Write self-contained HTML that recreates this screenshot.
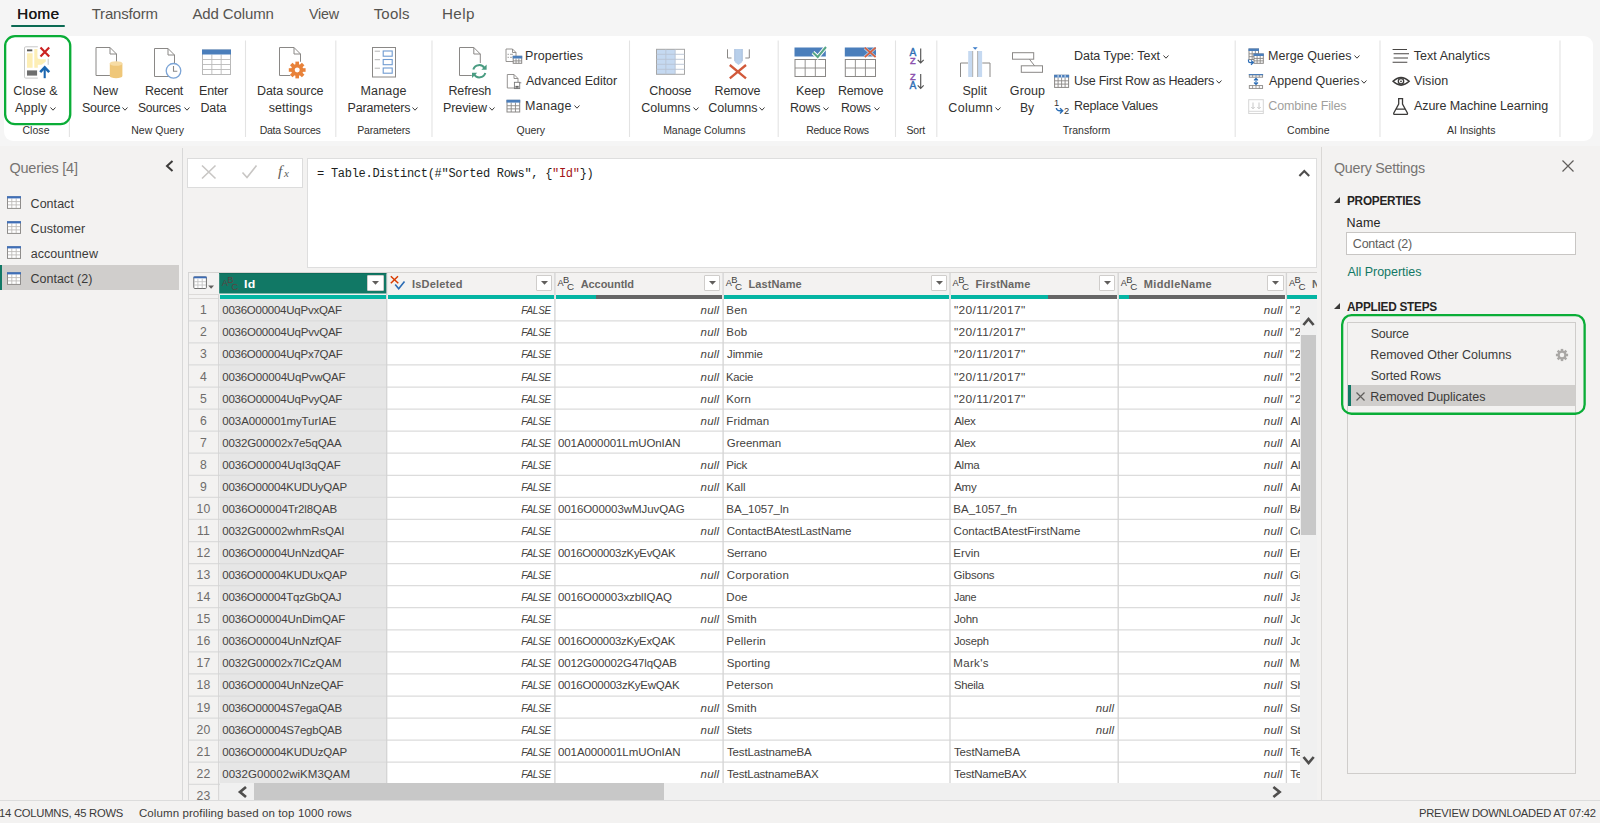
<!DOCTYPE html>
<html lang="en"><head><meta charset="utf-8"><title>Power Query Editor</title>
<style>
*{box-sizing:border-box;margin:0;padding:0}
html,body{width:1600px;height:823px;overflow:hidden;background:#f3f2f1;font-family:"Liberation Sans",sans-serif;}
#app{position:relative;width:1600px;height:823px;overflow:hidden;background:#f3f2f1}
.t{position:absolute;white-space:pre;line-height:20px;height:20px}
.b{position:absolute}
svg{position:absolute;overflow:visible}
</style></head><body><div id="app">
<!-- tabs --><div class="b" style="left:0px;top:0px;width:1600px;height:146px;background:#f5f5f5;"></div><span class="t" style="font-size:15px;color:#1b1a19;left:17.27px;transform-origin:0 0;top:3.87px;transform:scaleX(1.021);letter-spacing:0.35px;text-shadow:0.25px 0 0 #1b1a19;">Home</span><div class="b" style="left:11px;top:24.7px;width:54px;height:2.6px;background:#0b6a53;border-radius:1.5px;"></div><span class="t" style="font-size:15px;color:#55534f;left:91.66px;top:3.87px;letter-spacing:-0.18px;">Transform</span><span class="t" style="font-size:15px;color:#55534f;left:192.47px;top:3.87px;letter-spacing:-0.12px;">Add Column</span><span class="t" style="font-size:15px;color:#55534f;left:309.43px;transform-origin:0 0;top:3.87px;transform:scaleX(0.953);letter-spacing:-0.25px;">View</span><span class="t" style="font-size:15px;color:#55534f;left:373.66px;top:3.87px;letter-spacing:0.21px;">Tools</span><span class="t" style="font-size:15px;color:#55534f;left:442.27px;transform-origin:0 0;top:3.87px;transform:scaleX(1.015);letter-spacing:0.35px;">Help</span><!-- ribbon --><div class="b" style="left:4px;top:36px;width:1589px;height:105px;background:#ffffff;border-radius:9px;"></div><svg style="left:0;top:0" width="1600" height="150" viewBox="0 0 1600 150"><path d="M69.4 40.5V137M245.5 40.5V137M335.8 40.5V137M432 40.5V137M629.5 40.5V137M778.2 40.5V137M895.5 40.5V137M936.8 40.5V137M1235.2 40.5V137M1380 40.5V137M1560 40.5V137" stroke="#e3e3e3" stroke-width="1.1" fill="none"/></svg><span class="t" style="font-size:12.5px;color:#323130;left:13.37px;top:81.47px;letter-spacing:0.09px;">Close &amp;</span><span class="t" style="font-size:12.5px;color:#323130;left:14.98px;top:97.97px;letter-spacing:0.19px;">Apply</span><svg style="left:49.7px;top:106.5px" width="6" height="4.2" viewBox="0 0 6 4.2"><path d="M0.5 0.5 L3 3.2 L5.5 0.5" fill="none" stroke="#3b3a39" stroke-width="1"/></svg><span class="t" style="font-size:10.5px;color:#323130;left:22.47px;top:119.76px;letter-spacing:0.04px;">Close</span><span class="t" style="font-size:12.5px;color:#323130;left:92.97px;top:81.47px;letter-spacing:-0.01px;">New</span><span class="t" style="font-size:12.5px;color:#323130;left:81.93px;top:97.97px;letter-spacing:-0.20px;">Source</span><svg style="left:122.2px;top:106.5px" width="6" height="4.2" viewBox="0 0 6 4.2"><path d="M0.5 0.5 L3 3.2 L5.5 0.5" fill="none" stroke="#3b3a39" stroke-width="1"/></svg><span class="t" style="font-size:12.5px;color:#323130;left:144.97px;top:81.47px;letter-spacing:-0.25px;">Recent</span><span class="t" style="font-size:12.5px;color:#323130;left:138.43px;transform-origin:0 0;top:97.97px;transform:scaleX(0.969);letter-spacing:-0.25px;">Sources</span><svg style="left:184.2px;top:106.5px" width="6" height="4.2" viewBox="0 0 6 4.2"><path d="M0.5 0.5 L3 3.2 L5.5 0.5" fill="none" stroke="#3b3a39" stroke-width="1"/></svg><span class="t" style="font-size:12.5px;color:#323130;left:198.97px;top:81.47px;letter-spacing:-0.16px;">Enter</span><span class="t" style="font-size:12.5px;color:#323130;left:200.47px;top:97.97px;letter-spacing:-0.13px;">Data</span><span class="t" style="font-size:10.5px;color:#323130;left:131.14px;top:119.76px;letter-spacing:0.05px;">New Query</span><span class="t" style="font-size:12.5px;color:#323130;left:256.97px;top:81.47px;letter-spacing:-0.08px;">Data source</span><span class="t" style="font-size:12.5px;color:#323130;left:268.65px;top:97.97px;letter-spacing:0.10px;">settings</span><span class="t" style="font-size:10.5px;color:#323130;left:259.64px;top:119.76px;letter-spacing:-0.22px;">Data Sources</span><span class="t" style="font-size:12.5px;color:#323130;left:360.47px;top:81.47px;letter-spacing:0.18px;">Manage</span><span class="t" style="font-size:12.5px;color:#323130;left:347.47px;top:97.97px;letter-spacing:-0.18px;">Parameters</span><svg style="left:412px;top:106.5px" width="6" height="4.2" viewBox="0 0 6 4.2"><path d="M0.5 0.5 L3 3.2 L5.5 0.5" fill="none" stroke="#3b3a39" stroke-width="1"/></svg><span class="t" style="font-size:10.5px;color:#323130;left:357.14px;top:119.76px;letter-spacing:-0.12px;">Parameters</span><span class="t" style="font-size:12.5px;color:#323130;left:448.47px;top:81.47px;letter-spacing:-0.16px;">Refresh</span><span class="t" style="font-size:12.5px;color:#323130;left:442.97px;top:97.97px;letter-spacing:-0.08px;">Preview</span><svg style="left:489.2px;top:106.5px" width="6" height="4.2" viewBox="0 0 6 4.2"><path d="M0.5 0.5 L3 3.2 L5.5 0.5" fill="none" stroke="#3b3a39" stroke-width="1"/></svg><span class="t" style="font-size:12.5px;color:#323130;left:524.97px;top:46.48px;letter-spacing:0.11px;">Properties</span><span class="t" style="font-size:12.5px;color:#323130;left:525.98px;top:71.47px;letter-spacing:-0.04px;">Advanced Editor</span><span class="t" style="font-size:12.5px;color:#323130;left:524.97px;top:96.47px;letter-spacing:0.28px;">Manage</span><svg style="left:573.7px;top:105px" width="6" height="4.2" viewBox="0 0 6 4.2"><path d="M0.5 0.5 L3 3.2 L5.5 0.5" fill="none" stroke="#3b3a39" stroke-width="1"/></svg><span class="t" style="font-size:10.5px;color:#323130;left:516.5px;top:119.76px;letter-spacing:-0.02px;">Query</span><span class="t" style="font-size:12.5px;color:#323130;left:649.37px;top:81.47px;letter-spacing:-0.18px;">Choose</span><span class="t" style="font-size:12.5px;color:#323130;left:641.37px;top:97.97px;letter-spacing:-0.04px;">Columns</span><svg style="left:692.5px;top:106.5px" width="6" height="4.2" viewBox="0 0 6 4.2"><path d="M0.5 0.5 L3 3.2 L5.5 0.5" fill="none" stroke="#3b3a39" stroke-width="1"/></svg><span class="t" style="font-size:12.5px;color:#323130;left:714.47px;top:81.47px;letter-spacing:-0.09px;">Remove</span><span class="t" style="font-size:12.5px;color:#323130;left:708.37px;top:97.97px;letter-spacing:-0.04px;">Columns</span><svg style="left:759px;top:106.5px" width="6" height="4.2" viewBox="0 0 6 4.2"><path d="M0.5 0.5 L3 3.2 L5.5 0.5" fill="none" stroke="#3b3a39" stroke-width="1"/></svg><span class="t" style="font-size:10.5px;color:#323130;left:663.14px;top:119.76px;letter-spacing:-0.00px;">Manage Columns</span><span class="t" style="font-size:12.5px;color:#323130;left:795.97px;top:81.47px;letter-spacing:-0.05px;">Keep</span><span class="t" style="font-size:12.5px;color:#323130;left:789.97px;top:97.97px;letter-spacing:-0.25px;">Rows</span><svg style="left:823px;top:106.5px" width="6" height="4.2" viewBox="0 0 6 4.2"><path d="M0.5 0.5 L3 3.2 L5.5 0.5" fill="none" stroke="#3b3a39" stroke-width="1"/></svg><span class="t" style="font-size:12.5px;color:#323130;left:837.97px;top:81.47px;letter-spacing:-0.19px;">Remove</span><span class="t" style="font-size:12.5px;color:#323130;left:840.97px;transform-origin:0 0;top:97.97px;transform:scaleX(0.981);letter-spacing:-0.25px;">Rows</span><svg style="left:873.5px;top:106.5px" width="6" height="4.2" viewBox="0 0 6 4.2"><path d="M0.5 0.5 L3 3.2 L5.5 0.5" fill="none" stroke="#3b3a39" stroke-width="1"/></svg><span class="t" style="font-size:10.5px;color:#323130;left:806.14px;top:119.76px;letter-spacing:-0.25px;">Reduce Rows</span><span class="t" style="font-size:10.5px;color:#323130;left:906.52px;top:119.76px;letter-spacing:-0.24px;">Sort</span><span class="t" style="font-size:12.5px;color:#323130;left:962.43px;top:81.47px;letter-spacing:0.08px;">Split</span><span class="t" style="font-size:12.5px;color:#323130;left:948.37px;top:97.97px;letter-spacing:0.27px;">Column</span><svg style="left:994.5px;top:106.5px" width="6" height="4.2" viewBox="0 0 6 4.2"><path d="M0.5 0.5 L3 3.2 L5.5 0.5" fill="none" stroke="#3b3a39" stroke-width="1"/></svg><span class="t" style="font-size:12.5px;color:#323130;left:1009.87px;top:81.47px;letter-spacing:0.10px;">Group</span><span class="t" style="font-size:12.5px;color:#323130;left:1019.97px;transform-origin:0 0;top:97.97px;transform:scaleX(0.978);letter-spacing:-0.25px;">By</span><span class="t" style="font-size:12.5px;color:#323130;left:1073.97px;top:46.48px;letter-spacing:-0.02px;">Data Type: Text</span><svg style="left:1163px;top:55px" width="6" height="4.2" viewBox="0 0 6 4.2"><path d="M0.5 0.5 L3 3.2 L5.5 0.5" fill="none" stroke="#3b3a39" stroke-width="1"/></svg><span class="t" style="font-size:12.5px;color:#323130;left:1074.04px;top:71.47px;letter-spacing:-0.25px;">Use First Row as Headers</span><svg style="left:1216.2px;top:80px" width="6" height="4.2" viewBox="0 0 6 4.2"><path d="M0.5 0.5 L3 3.2 L5.5 0.5" fill="none" stroke="#3b3a39" stroke-width="1"/></svg><span class="t" style="font-size:12.5px;color:#323130;left:1073.97px;top:96.47px;letter-spacing:-0.20px;">Replace Values</span><span class="t" style="font-size:10.5px;color:#323130;left:1062.76px;top:119.76px;">Transform</span><span class="t" style="font-size:12.5px;color:#323130;left:1267.97px;top:46.48px;letter-spacing:0.07px;">Merge Queries</span><svg style="left:1353.7px;top:55px" width="6" height="4.2" viewBox="0 0 6 4.2"><path d="M0.5 0.5 L3 3.2 L5.5 0.5" fill="none" stroke="#3b3a39" stroke-width="1"/></svg><span class="t" style="font-size:12.5px;color:#323130;left:1268.98px;top:71.47px;letter-spacing:0.01px;">Append Queries</span><svg style="left:1361px;top:80px" width="6" height="4.2" viewBox="0 0 6 4.2"><path d="M0.5 0.5 L3 3.2 L5.5 0.5" fill="none" stroke="#3b3a39" stroke-width="1"/></svg><span class="t" style="font-size:12.5px;color:#a19f9d;left:1268.37px;top:96.47px;letter-spacing:-0.15px;">Combine Files</span><span class="t" style="font-size:10.5px;color:#323130;left:1286.97px;top:119.76px;letter-spacing:0.08px;">Combine</span><span class="t" style="font-size:12.5px;color:#323130;left:1413.72px;top:46.48px;letter-spacing:0.04px;">Text Analytics</span><span class="t" style="font-size:12.5px;color:#323130;left:1413.95px;top:71.47px;letter-spacing:0.11px;">Vision</span><span class="t" style="font-size:12.5px;color:#323130;left:1413.98px;top:96.47px;letter-spacing:-0.06px;">Azure Machine Learning</span><span class="t" style="font-size:10.5px;color:#323130;left:1446.98px;top:119.76px;letter-spacing:-0.06px;">AI Insights</span><svg style="left:0;top:0" width="1600" height="150" viewBox="0 0 1600 150"><rect x="24.5" y="46.8" width="23.7" height="31.3" rx="1.2" fill="#fff" stroke="#c8c8c8"/><path d="M27 53.3 H32.6 V67.8 H27 Z M34.3 49.1 H37.5 V57.6 L40.5 59.3 H45.8 V61.4 L38 67.8 H34.3 Z" fill="#fdeeb5"/><rect x="27" y="49.4" width="5.3" height="1.9" fill="#5a5a5a"/><rect x="27" y="70.4" width="10.1" height="5.2" fill="#6e6e6e"/><rect x="37.8" y="45.5" width="13" height="13.2" fill="#fff"/><rect x="37.8" y="64.8" width="13" height="14.2" fill="#fff"/><path d="M40.5 47.6 L49.2 56.4 M49.2 47.6 L40.5 56.4" stroke="#cc2222" stroke-width="2.2" fill="none"/><path d="M44.7 78.2 V68" stroke="#1a66b0" stroke-width="2.1" fill="none"/><path d="M40.2 72.2 L44.7 67.3 L49.2 72.2" stroke="#1a66b0" stroke-width="2.6" fill="none"/><path d="M96 47.5 H110 L116.5 54 V75.5 H96 Z" fill="#fff" stroke="#8a8886" stroke-width="1"/><path d="M110 47.5 V54 H116.5" fill="none" stroke="#8a8886" stroke-width="1"/><path d="M109.8 63.5 V76 A6.3 2.3 0 0 0 122.4 76 V63.5 Z" fill="#efc779"/><ellipse cx="116.1" cy="63.5" rx="6.3" ry="2.3" fill="#f7dca4"/><path d="M154.5 48.5 H168 L174.5 55 V76.5 H154.5 Z" fill="#fff" stroke="#8a8886" stroke-width="1"/><path d="M168 48.5 V55 H174.5" fill="none" stroke="#8a8886" stroke-width="1"/><circle cx="173.5" cy="70.8" r="7.3" fill="#fff" stroke="#7ba4d6" stroke-width="1.3"/><path d="M173.5 66 V71.3 H177.3" fill="none" stroke="#8a8886" stroke-width="1.1"/><rect x="202.5" y="50" width="28" height="24.5" fill="#fff" stroke="#b9b9b9" stroke-width="1"/><path d="M211.833 54.5V74.5M221.167 54.5V74.5M202.5 59.5H230.5M202.5 64.5H230.5M202.5 69.5H230.5" fill="none" stroke="#b9b9b9" stroke-width="0.9"/><rect x="202" y="49.5" width="29" height="5" fill="#4a7ebb"/><path d="M279.5 47.5 H294 L300.5 54 V75.5 H279.5 Z" fill="#fff" stroke="#8a8886" stroke-width="1"/><path d="M294 47.5 V54 H300.5" fill="none" stroke="#8a8886" stroke-width="1"/><circle cx="297.2" cy="70" r="9" fill="#fff"/><rect x="295.4" y="61.6" width="3.6" height="4" fill="#e8823a" transform="rotate(0 297.2 70)"/><rect x="295.4" y="61.6" width="3.6" height="4" fill="#e8823a" transform="rotate(45 297.2 70)"/><rect x="295.4" y="61.6" width="3.6" height="4" fill="#e8823a" transform="rotate(90 297.2 70)"/><rect x="295.4" y="61.6" width="3.6" height="4" fill="#e8823a" transform="rotate(135 297.2 70)"/><rect x="295.4" y="61.6" width="3.6" height="4" fill="#e8823a" transform="rotate(180 297.2 70)"/><rect x="295.4" y="61.6" width="3.6" height="4" fill="#e8823a" transform="rotate(225 297.2 70)"/><rect x="295.4" y="61.6" width="3.6" height="4" fill="#e8823a" transform="rotate(270 297.2 70)"/><rect x="295.4" y="61.6" width="3.6" height="4" fill="#e8823a" transform="rotate(315 297.2 70)"/><circle cx="297.2" cy="70" r="4.3" fill="none" stroke="#e8823a" stroke-width="3.6"/><rect x="372.5" y="47.5" width="23" height="29.5" fill="#fff" stroke="#8a8886"/><rect x="383.2" y="51" width="9" height="5.2" fill="#fff" stroke="#6f9bd1" stroke-width="1.1"/><path d="M374.7 51.2 H380" stroke="#b4b4b4" stroke-width="1"/><rect x="383.2" y="59.5" width="9" height="5.2" fill="#fff" stroke="#6f9bd1" stroke-width="1.1"/><path d="M374.7 59.7 H380" stroke="#b4b4b4" stroke-width="1"/><rect x="383.2" y="68" width="9" height="5.2" fill="#fff" stroke="#6f9bd1" stroke-width="1.1"/><path d="M374.7 68.2 H380" stroke="#b4b4b4" stroke-width="1"/><path d="M459.5 47.5 H473.8 L480.3 54 V75.5 H459.5 Z" fill="#fff" stroke="#8a8886" stroke-width="1"/><path d="M473.8 47.5 V54 H480.3" fill="none" stroke="#8a8886" stroke-width="1"/><circle cx="479.3" cy="71.3" r="8.6" fill="#fff"/><path d="M473.3 69.5 A6.2 6.2 0 0 1 484.6 68.2" fill="none" stroke="#4a9c82" stroke-width="2"/><path d="M485.3 73 A6.2 6.2 0 0 1 474 74.3" fill="none" stroke="#4a9c82" stroke-width="2"/><path d="M486.6 64.6 V69.8 H481.4 Z" fill="#4a9c82"/><path d="M472 78 V72.8 H477.2 Z" fill="#4a9c82"/><path d="M506 49 H512.5 L516 52.5 V61.5 H506 Z" fill="#fff" stroke="#8a8886" stroke-width="0.9"/><path d="M512.5 49 V52.5 H516" fill="none" stroke="#8a8886" stroke-width="0.9"/><path d="M507.5 54.3 H509 M510 54.3 H513 M507.5 57.3 H509 M510 57.3 H512" stroke="#9a9a9a" stroke-width="0.9"/><rect x="513.2" y="56.3" width="8.5" height="7" fill="#fff" stroke="#8a8886" stroke-width="1"/><path d="M516.033 58.5V63.3M518.867 58.5V63.3M513.2 60.9H521.7" fill="none" stroke="#8a8886" stroke-width="0.9"/><rect x="512.7" y="55.8" width="9.5" height="2.7" fill="#4a7ebb"/><path d="M507.3 74.5 H514 L518 78.5 V88 H507.3 Z" fill="#fff" stroke="#8a8886" stroke-width="0.9"/><path d="M514 74.5 V78.5 H518" fill="none" stroke="#8a8886" stroke-width="0.9"/><rect x="514.4" y="82.3" width="5.3" height="6.3" fill="#fff" stroke="#7a7a7a" stroke-width="0.9"/><path d="M519.7 82.8 H521.3" stroke="#7a7a7a" stroke-width="0.9"/><path d="M515.4 86.4 H518.7 M515.4 87.8 H518.7" stroke="#555" stroke-width="1"/><rect x="507" y="100.3" width="12.7" height="11.7" fill="#fff" stroke="#8a8886" stroke-width="1"/><path d="M511.233 102.6V112M515.467 102.6V112M507 105.733H519.7M507 108.867H519.7" fill="none" stroke="#8a8886" stroke-width="0.9"/><rect x="506.5" y="99.8" width="13.7" height="2.8" fill="#4a7ebb"/><rect x="656.5" y="49.3" width="28" height="25" fill="#fff"/><rect x="656.5" y="49.3" width="18.7" height="25" fill="#c5d9f1"/><rect x="656.5" y="49.3" width="28" height="25" fill="none" stroke="#a6a6a6" stroke-width="1"/><path d="M665.833 49.3V74.3M675.167 49.3V74.3M656.5 54.3H684.5M656.5 59.3H684.5M656.5 64.3H684.5M656.5 69.3H684.5" fill="none" stroke="#b9c4d4" stroke-width="0.9"/><path d="M727.5 49.3 V58 H731.5 M745.3 58 H749.3 V49.3" fill="none" stroke="#8a8886" stroke-width="1"/><path d="M734.7 49 H742.3 V62 L738.5 65 L734.7 62 Z" fill="#b8cfea"/><path d="M734.7 49 V61 M742.3 49 V61" stroke="#9fb6d6" stroke-width="0.8" fill="none"/><path d="M729.8 65 L746 78.3 M746 65 L729.8 78.3" stroke="#d1593a" stroke-width="2.3" fill="none"/><rect x="794.5" y="47.5" width="31.3" height="9" fill="#4a7ebb"/><rect x="795" y="59.5" width="30.5" height="17" fill="#fff" stroke="#8a8886" stroke-width="1"/><path d="M805.167 59.5V76.5M815.333 59.5V76.5M795 68H825.5" fill="none" stroke="#8a8886" stroke-width="0.9"/><path d="M813 52.5 L817.7 57 L826 47" stroke="#fff" stroke-width="4" fill="none"/><path d="M813 52.5 L817.7 57 L826 47" stroke="#55a585" stroke-width="2" fill="none"/><rect x="844.8" y="47.5" width="31.2" height="9" fill="#4a7ebb"/><rect x="845.3" y="59.5" width="30.2" height="17" fill="#fff" stroke="#8a8886" stroke-width="1"/><path d="M855.367 59.5V76.5M865.433 59.5V76.5M845.3 68H875.5" fill="none" stroke="#8a8886" stroke-width="0.9"/><path d="M864.8 48 L875.3 57 M875.3 48 L864.8 57" stroke="#fff" stroke-width="3.2" fill="none" opacity="0.55"/><path d="M864.8 47.6 L875.6 57.2 M875.6 47.6 L864.8 57.2" stroke="#d6603f" stroke-width="1.7" fill="none"/><text x="909.6" y="55.9" font-family="Liberation Sans, sans-serif" stroke-width="0.4" paint-order="stroke" font-size="10.2" fill="#2f6fb5" stroke="#2f6fb5">A</text><text x="909.9" y="63.6" font-family="Liberation Sans, sans-serif" stroke-width="0.4" paint-order="stroke" font-size="9.2" fill="#8b4fae" stroke="#8b4fae">Z</text><path d="M920.7 48.6 V62.6 M917.7 59.8 L920.7 62.9 L923.7 59.8" stroke="#555" stroke-width="1.15" fill="none"/><text x="909.9" y="80.4" font-family="Liberation Sans, sans-serif" stroke-width="0.4" paint-order="stroke" font-size="9.2" fill="#8b4fae" stroke="#8b4fae">Z</text><text x="909.4" y="88.9" font-family="Liberation Sans, sans-serif" stroke-width="0.4" paint-order="stroke" font-size="10.2" fill="#2f6fb5" stroke="#2f6fb5">A</text><path d="M920.7 74 V88.2 M917.7 85.4 L920.7 88.5 L923.7 85.4" stroke="#555" stroke-width="1.15" fill="none"/><rect x="968.2" y="51" width="4.3" height="26" fill="#c5d9f1"/><rect x="977.8" y="51" width="4.3" height="26" fill="#c5d9f1"/><path d="M972.7 51 V77 M977.6 51 V77" stroke="#a6a6a6" stroke-width="0.9" fill="none"/><path d="M960.5 77 V63 H968 M982.3 63 H990 V77" stroke="#8a8886" stroke-width="1" fill="none"/><path d="M972.7 47.3 H977.7 L975.2 49.8 Z" fill="#3a7bc8"/><rect x="1012.5" y="52.7" width="21.2" height="6.5" fill="#fff" stroke="#8a8886"/><rect x="1021.3" y="65.8" width="21.2" height="6.5" fill="#fff" stroke="#8a8886"/><path d="M1029.4 59.2 L1034.6 65.8" stroke="#8a8886" stroke-width="1" fill="none"/><rect x="1054.6" y="75.3" width="14" height="12.1" fill="#fff" stroke="#8a8886" stroke-width="1"/><path d="M1058.1 77.5V87.4M1061.6 77.5V87.4M1065.1 77.5V87.4M1054.6 80.8H1068.6M1054.6 84.1H1068.6" fill="none" stroke="#8a8886" stroke-width="0.9"/><rect x="1054.1" y="74.8" width="15" height="2.7" fill="#4a7ebb"/><path d="M1058.1 75 V77.3 M1061.6 75 V77.3 M1065.1 75 V77.3" stroke="#fff" stroke-width="0.8"/><text x="1054" y="105.8" font-family="Liberation Sans, sans-serif" font-size="9.3" fill="#333">1</text><text x="1064" y="114.2" font-family="Liberation Sans, sans-serif" font-size="9.3" fill="#333">2</text><path d="M1056.3 108 Q1056.8 110.9 1060 110.8 H1062.3 M1060 108.2 L1062.7 110.8 L1060 113.4" stroke="#2a6db5" stroke-width="1.4" fill="none"/><rect x="1249" y="49" width="9.5" height="10.5" fill="#fff" stroke="#8a8886" stroke-width="1"/><path d="M1252.17 51V59.5M1255.33 51V59.5M1249 53.8333H1258.5M1249 56.6667H1258.5" fill="none" stroke="#8a8886" stroke-width="0.9"/><rect x="1248.5" y="48.5" width="10.5" height="2.5" fill="#4a7ebb"/><rect x="1254" y="54" width="9.3" height="9.3" fill="#fff" stroke="#8a8886" stroke-width="1"/><path d="M1257.1 56V63.3M1260.2 56V63.3M1254 58.4333H1263.3M1254 60.8667H1263.3" fill="none" stroke="#8a8886" stroke-width="0.9"/><rect x="1253.5" y="53.5" width="10.3" height="2.5" fill="#4a7ebb"/><path d="M1248.5 59.5 V61 Q1248.5 62.6 1250.2 62.6 H1253 M1251 60.5 L1253.3 62.6 L1251 64.8" stroke="#2b6cb5" stroke-width="1.2" fill="none"/><rect x="1249.3" y="74.8" width="13.3" height="2.4" fill="#fff" stroke="#8a8886" stroke-width="0.9"/><rect x="1248.8" y="74" width="14.3" height="1.2" fill="#4a7ebb"/><rect x="1249.3" y="85.6" width="13.3" height="2.8" fill="#fff" stroke="#8a8886" stroke-width="0.9"/><path d="M1252.6 74.8 V77.2 M1256 74.8 V77.2 M1259.3 74.8 V77.2 M1252.6 85.6 V88.4 M1256 85.6 V88.4 M1259.3 85.6 V88.4" stroke="#8a8886" stroke-width="0.8"/><path d="M1256 78.5 V84.3 M1254 80.3 L1256 78.3 L1258 80.3 M1254 82.5 L1256 84.5 L1258 82.5" stroke="#2b6cb5" stroke-width="1.1" fill="none"/><rect x="1248.7" y="99.7" width="14.6" height="13.8" fill="#fff" stroke="#d6d6d6"/><path d="M1248.7 111.3 H1263.3" stroke="#d6d6d6" stroke-width="1"/><path d="M1253 102.5 V108.5 M1251.3 107 L1253 108.8 L1254.7 107 M1259 102.5 V108.5 M1257.3 107 L1259 108.8 L1260.7 107" stroke="#c8c8c8" stroke-width="1" fill="none"/><path d="M1392.6 49.5 H1407 M1393.6 53.7 H1409 M1393.6 58 H1408 M1392.6 62.2 H1407.3" stroke="#484644" stroke-width="1.1" fill="none"/><path d="M1393 81.3 Q1401 73.5 1409.2 81.3 Q1401 89 1393 81.3 Z" fill="#fff" stroke="#3b3a39" stroke-width="1.4"/><circle cx="1401" cy="81.3" r="2.7" fill="#fff" stroke="#3b3a39" stroke-width="1.3"/><circle cx="1401" cy="81.3" r="0.9" fill="#3b3a39"/><path d="M1398 98.7 H1403.2 M1398.7 98.7 V104 L1393.8 113 Q1393.3 114.4 1394.8 114.4 H1406.4 Q1407.9 114.4 1407.4 113 L1402.5 104 V98.7 M1395.8 109.2 H1405.4" fill="none" stroke="#3b3a39" stroke-width="1.3"/></svg><svg style="left:2.8px;top:33.9px" width="69.4" height="92.3" viewBox="2.8 33.9 69.4 92.3"><rect x="4.95" y="36.05" width="65.1" height="88" rx="9.85" fill="none" stroke="#0aad37" stroke-width="2.3"/></svg><!-- queries pane --><div class="b" style="left:182px;top:147.5px;width:1px;height:653.5px;background:#d8d8d8;"></div><span class="t" style="font-size:14.5px;color:#767472;left:9.51px;top:157.8px;letter-spacing:-0.25px;">Queries [4]</span><svg style="left:165px;top:160px" width="9" height="12" viewBox="0 0 9 12"><path d="M7.5 1 L2 6 L7.5 11" fill="none" stroke="#3b3a39" stroke-width="2"/></svg><div class="b" style="left:0px;top:265.4px;width:178.8px;height:25px;background:#d0cecc;"></div><div class="b" style="left:0px;top:265.4px;width:1.5px;height:25px;background:#117865;"></div><svg style="left:7.2px;top:196.4px" width="14" height="13" viewBox="0 0 14 13"><rect x="0.5" y="0.8" width="13" height="11.6" fill="#fff" stroke="#8f8d8b"/><path d="M0.9 5.6H13.1M0.9 8.9H13.1M4.8 2.5V12M9.2 2.5V12" stroke="#bdbbb9" stroke-width="0.9" fill="none"/><rect x="0" y="0.2" width="14" height="2.2" fill="#3f6fb8"/></svg><span class="t" style="font-size:12.5px;color:#3b3a39;left:30.57px;top:194px;letter-spacing:0.04px;">Contact</span><svg style="left:7.2px;top:221.4px" width="14" height="13" viewBox="0 0 14 13"><rect x="0.5" y="0.8" width="13" height="11.6" fill="#fff" stroke="#8f8d8b"/><path d="M0.9 5.6H13.1M0.9 8.9H13.1M4.8 2.5V12M9.2 2.5V12" stroke="#bdbbb9" stroke-width="0.9" fill="none"/><rect x="0" y="0.2" width="14" height="2.2" fill="#3f6fb8"/></svg><span class="t" style="font-size:12.5px;color:#3b3a39;left:30.57px;top:219px;letter-spacing:0.06px;">Customer</span><svg style="left:7.2px;top:246.4px" width="14" height="13" viewBox="0 0 14 13"><rect x="0.5" y="0.8" width="13" height="11.6" fill="#fff" stroke="#8f8d8b"/><path d="M0.9 5.6H13.1M0.9 8.9H13.1M4.8 2.5V12M9.2 2.5V12" stroke="#bdbbb9" stroke-width="0.9" fill="none"/><rect x="0" y="0.2" width="14" height="2.2" fill="#3f6fb8"/></svg><span class="t" style="font-size:12.5px;color:#3b3a39;left:30.67px;top:244px;letter-spacing:0.06px;">accountnew</span><svg style="left:7.2px;top:271.6px" width="14" height="13" viewBox="0 0 14 13"><rect x="0.5" y="0.8" width="13" height="11.6" fill="#fff" stroke="#8f8d8b"/><path d="M0.9 5.6H13.1M0.9 8.9H13.1M4.8 2.5V12M9.2 2.5V12" stroke="#bdbbb9" stroke-width="0.9" fill="none"/><rect x="0" y="0.2" width="14" height="2.2" fill="#3f6fb8"/></svg><span class="t" style="font-size:12.5px;color:#3b3a39;left:30.57px;top:269.2px;letter-spacing:-0.01px;">Contact (2)</span><!-- formula bar --><div class="b" style="left:187px;top:158px;width:116px;height:29.5px;background:#ffffff;border:1px solid #dcdcdc;"></div><svg style="left:200px;top:164px" width="18" height="16" viewBox="0 0 18 16"><path d="M2 1.5 L15.5 14.5 M15.5 1.5 L2 14.5" fill="none" stroke="#c8c6c4" stroke-width="1.6"/></svg><svg style="left:241px;top:164px" width="18" height="16" viewBox="0 0 18 16"><path d="M1.5 8.5 L6 13.5 L15.5 1.5" fill="none" stroke="#c8c6c4" stroke-width="1.6"/></svg><span class="t" style="font-size:15.5px;color:#605e5c;font-style:italic;font-family:'Liberation Serif', serif;left:278.03px;top:161.05px;">f</span><span class="t" style="font-size:11px;color:#605e5c;font-style:italic;font-family:'Liberation Serif', serif;left:283.93px;top:162.74px;">x</span><div class="b" style="left:307px;top:158px;width:1010px;height:109.5px;background:#ffffff;border:1px solid #dedede;"></div><span class="t" style="font-size:12px;color:#201f1e;font-family:'Liberation Mono', monospace;top:164.4px;letter-spacing:-0.29px;left:317.1px;">= Table.Distinct(#"Sorted Rows", {</span><span class="t" style="font-size:12px;color:#a31515;font-family:'Liberation Mono', monospace;top:164.4px;letter-spacing:-0.29px;left:552.04px;">"Id"</span><span class="t" style="font-size:12px;color:#201f1e;font-family:'Liberation Mono', monospace;top:164.4px;letter-spacing:-0.29px;left:579.68px;">})</span><svg style="left:1298px;top:169px" width="13" height="9" viewBox="0 0 13 9"><path d="M1.4 7 L6.3 2 L11.2 7" fill="none" stroke="#4f4e4d" stroke-width="2.1"/></svg><!-- grid --><div class="b" style="left:188px;top:272px;width:1129px;height:528px;overflow:hidden;background:#fff"><div class="b" style="left:0px;top:0px;width:1129px;height:23px;background:#f3f2f1;"></div><div class="b" style="left:0px;top:0px;width:31px;height:529px;background:#f3f2f1;"></div><div class="b" style="left:31.6px;top:26.8px;width:166px;height:485.2px;background:#e6e6e6;"></div><div class="b" style="left:32.1px;top:22.9px;width:165.5px;height:3.9px;background:#04b5a3;"></div><div class="b" style="left:199.6px;top:22.9px;width:166.2px;height:3.9px;background:#04b5a3;"></div><div class="b" style="left:367.8px;top:22.9px;width:166.2px;height:3.9px;background:#04b5a3;"></div><div class="b" style="left:536px;top:22.9px;width:224.9px;height:3.9px;background:#04b5a3;"></div><div class="b" style="left:762.9px;top:22.9px;width:166.2px;height:3.9px;background:#04b5a3;"></div><div class="b" style="left:931.1px;top:22.9px;width:166.2px;height:3.9px;background:#04b5a3;"></div><div class="b" style="left:1099.3px;top:22.9px;width:111.6px;height:3.9px;background:#04b5a3;"></div><div class="b" style="left:408px;top:22.9px;width:126px;height:3.9px;background:#666666;"></div><div class="b" style="left:860px;top:22.9px;width:69.1px;height:3.9px;background:#666666;"></div><div class="b" style="left:941px;top:22.9px;width:156.3px;height:3.9px;background:#666666;"></div><div class="b" style="left:0px;top:21.8px;width:31px;height:1px;background:#dcdad8;"></div><div class="b" style="left:0px;top:25.9px;width:31px;height:1px;background:#dcdad8;"></div><div class="b" style="left:0px;top:0px;width:1129px;height:1px;background:#d6d4d2;"></div><svg style="left:0;top:0" width="1129" height="528" viewBox="188 272 1129 528"><path d="M188 320.82H1317M188 342.89H1317M188 364.96H1317M188 387.03H1317M188 409.10H1317M188 431.17H1317M188 453.24H1317M188 475.31H1317M188 497.38H1317M188 519.45H1317M188 541.52H1317M188 563.59H1317M188 585.66H1317M188 607.73H1317M188 629.80H1317M188 651.87H1317M188 673.94H1317M188 696.01H1317M188 718.08H1317M188 740.15H1317M188 762.22H1317M188 784.29H1317" stroke="#dcdcdc" stroke-width="1.25" fill="none"/><path d="M188.3 272V801M218.8 294.5V801M386.7 273V784M554.9 273V784M723.1 273V784M950 273V784M1118.2 273V784M1286.4 273V784" stroke="#d4d4d4" stroke-width="1.3" fill="none"/><rect x="219.2" y="273" width="167.1" height="20.5" fill="#117865"/><rect x="219.2" y="273" width="167.1" height="0.9" fill="#0e6c5b"/></svg><div class="b" style="left:-188px;top:-272px;width:0;height:0"><span class="t" style="font-size:11px;color:#ffffff;font-weight:700;left:243.96px;transform-origin:0 0;top:273.7px;transform:scaleX(1.119);letter-spacing:0.35px;">Id</span><span class="t" style="font-size:9.2px;color:#5a4442;left:221.78px;top:273.3px;">A</span><span class="t" style="font-size:9.3px;color:#5a4442;left:227.34px;top:269.7px;">B</span><span class="t" style="font-size:9.8px;color:#5a4442;left:231.2px;top:276.8px;">C</span><div class="b" style="left:367.3px;top:274.7px;width:16.7px;height:16.5px;background:#ffffff;border:1px solid #cfcdcb;border-radius:1px;"></div><svg style="left:372.3px;top:281.2px" width="7" height="4" viewBox="0 0 7 4"><path d="M0 0 H7 L3.5 3.8 Z" fill="#605e5c"/></svg><span class="t" style="font-size:11px;color:#686664;font-weight:700;left:412.06px;top:273.8px;letter-spacing:0.19px;">IsDeleted</span><div class="b" style="left:535.5px;top:274.7px;width:16.7px;height:16.5px;background:#ffffff;border:1px solid #cfcdcb;border-radius:1px;"></div><svg style="left:540.5px;top:281.2px" width="7" height="4" viewBox="0 0 7 4"><path d="M0 0 H7 L3.5 3.8 Z" fill="#605e5c"/></svg><span class="t" style="font-size:11px;color:#686664;font-weight:700;left:580.63px;top:273.8px;letter-spacing:-0.04px;">AccountId</span><span class="t" style="font-size:9.2px;color:#3f3e3d;left:557.48px;top:273.3px;">A</span><span class="t" style="font-size:9.3px;color:#3f3e3d;left:563.04px;top:269.7px;">B</span><span class="t" style="font-size:9.8px;color:#3f3e3d;left:566.9px;top:276.8px;">C</span><div class="b" style="left:703.7px;top:274.7px;width:16.7px;height:16.5px;background:#ffffff;border:1px solid #cfcdcb;border-radius:1px;"></div><svg style="left:708.7px;top:281.2px" width="7" height="4" viewBox="0 0 7 4"><path d="M0 0 H7 L3.5 3.8 Z" fill="#605e5c"/></svg><span class="t" style="font-size:11px;color:#686664;font-weight:700;left:748.56px;top:273.8px;letter-spacing:0.08px;">LastName</span><span class="t" style="font-size:9.2px;color:#3f3e3d;left:725.68px;top:273.3px;">A</span><span class="t" style="font-size:9.3px;color:#3f3e3d;left:731.24px;top:269.7px;">B</span><span class="t" style="font-size:9.8px;color:#3f3e3d;left:735.1px;top:276.8px;">C</span><div class="b" style="left:930.6px;top:274.7px;width:16.7px;height:16.5px;background:#ffffff;border:1px solid #cfcdcb;border-radius:1px;"></div><svg style="left:935.6px;top:281.2px" width="7" height="4" viewBox="0 0 7 4"><path d="M0 0 H7 L3.5 3.8 Z" fill="#605e5c"/></svg><span class="t" style="font-size:11px;color:#686664;font-weight:700;left:975.46px;top:273.8px;letter-spacing:0.14px;">FirstName</span><span class="t" style="font-size:9.2px;color:#3f3e3d;left:952.58px;top:273.3px;">A</span><span class="t" style="font-size:9.3px;color:#3f3e3d;left:958.14px;top:269.7px;">B</span><span class="t" style="font-size:9.8px;color:#3f3e3d;left:962px;top:276.8px;">C</span><div class="b" style="left:1098.8px;top:274.7px;width:16.7px;height:16.5px;background:#ffffff;border:1px solid #cfcdcb;border-radius:1px;"></div><svg style="left:1103.8px;top:281.2px" width="7" height="4" viewBox="0 0 7 4"><path d="M0 0 H7 L3.5 3.8 Z" fill="#605e5c"/></svg><span class="t" style="font-size:11px;color:#686664;font-weight:700;left:1143.76px;top:273.8px;letter-spacing:0.35px;">MiddleName</span><span class="t" style="font-size:9.2px;color:#3f3e3d;left:1120.78px;top:273.3px;">A</span><span class="t" style="font-size:9.3px;color:#3f3e3d;left:1126.34px;top:269.7px;">B</span><span class="t" style="font-size:9.8px;color:#3f3e3d;left:1130.2px;top:276.8px;">C</span><div class="b" style="left:1267px;top:274.7px;width:16.7px;height:16.5px;background:#ffffff;border:1px solid #cfcdcb;border-radius:1px;"></div><svg style="left:1272px;top:281.2px" width="7" height="4" viewBox="0 0 7 4"><path d="M0 0 H7 L3.5 3.8 Z" fill="#605e5c"/></svg><span class="t" style="font-size:11px;color:#686664;font-weight:700;left:1312.06px;top:273.8px;">Name</span><span class="t" style="font-size:9.2px;color:#3f3e3d;left:1288.98px;top:273.3px;">A</span><span class="t" style="font-size:9.3px;color:#3f3e3d;left:1294.54px;top:269.7px;">B</span><span class="t" style="font-size:9.8px;color:#3f3e3d;left:1298.4px;top:276.8px;">C</span><svg style="left:388px;top:274px" width="19" height="18" viewBox="388 274 19 18"><path d="M390.8 276.3 L398.3 283.2 M398 276.3 L390.8 283.2" stroke="#d83b01" stroke-width="1.5" fill="none"/><path d="M395.2 284.6 L398.7 288.8 L404.5 281.4" stroke="#2b6cb5" stroke-width="1.6" fill="none"/></svg><svg style="left:193px;top:276px" width="22" height="14" viewBox="0 0 22 14"><rect x="0.8" y="0.9" width="12.6" height="11.6" rx="1" fill="#fff" stroke="#6e6e6e" stroke-width="1"/><rect x="0.5" y="0.5" width="13.2" height="1.8" fill="#3b6cb7"/><path d="M1 5.7H13M1 9H13M4.9 2.5V12.2M9.2 2.5V12.2" stroke="#c4c4c4" stroke-width="0.9" fill="none"/><path d="M15.2 9.4 H21 L18.1 12.8 Z" fill="#605e5c"/></svg><span class="t" style="font-size:12.2px;color:#6e6c6a;left:203.4px;top:300.3px;transform:translateX(-50%);">1</span><span class="t" style="font-size:11.5px;color:#444240;left:222.25px;top:300.3px;letter-spacing:-0.25px;">0036O00004UqPvxQAF</span><span class="t" style="font-size:11.3px;color:#444240;font-style:italic;left:550.79px;transform-origin:100% 0;top:300.3px;transform:translateX(-100%) scaleX(0.880);letter-spacing:-0.25px;">FALSE</span><span class="t" style="font-size:11.5px;color:#444240;font-style:italic;left:719.24px;top:300.3px;transform:translateX(-100%);letter-spacing:0.20px;">null</span><span class="t" style="font-size:11.5px;color:#444240;left:726.36px;top:300.3px;letter-spacing:0.11px;">Ben</span><span class="t" style="font-size:11.5px;color:#444240;left:953.71px;transform-origin:0 0;top:300.3px;transform:scaleX(1.036);letter-spacing:0.35px;">"20/11/2017"</span><span class="t" style="font-size:11.5px;color:#444240;font-style:italic;left:1282.54px;top:300.3px;transform:translateX(-100%);letter-spacing:0.20px;">null</span><span class="t" style="font-size:11.5px;color:#444240;left:1290.11px;top:300.3px;letter-spacing:0.55px;">"20/11/2017" Ben</span><span class="t" style="font-size:12.2px;color:#6e6c6a;left:203.4px;top:322.37px;transform:translateX(-50%);">2</span><span class="t" style="font-size:11.5px;color:#444240;left:222.25px;top:322.37px;letter-spacing:-0.23px;">0036O00004UqPvvQAF</span><span class="t" style="font-size:11.3px;color:#444240;font-style:italic;left:550.79px;transform-origin:100% 0;top:322.37px;transform:translateX(-100%) scaleX(0.880);letter-spacing:-0.25px;">FALSE</span><span class="t" style="font-size:11.5px;color:#444240;font-style:italic;left:719.24px;top:322.37px;transform:translateX(-100%);letter-spacing:0.20px;">null</span><span class="t" style="font-size:11.5px;color:#444240;left:726.36px;top:322.37px;letter-spacing:0.13px;">Bob</span><span class="t" style="font-size:11.5px;color:#444240;left:953.71px;transform-origin:0 0;top:322.37px;transform:scaleX(1.036);letter-spacing:0.35px;">"20/11/2017"</span><span class="t" style="font-size:11.5px;color:#444240;font-style:italic;left:1282.54px;top:322.37px;transform:translateX(-100%);letter-spacing:0.20px;">null</span><span class="t" style="font-size:11.5px;color:#444240;left:1290.11px;top:322.37px;letter-spacing:0.55px;">"20/11/2017" Bob</span><span class="t" style="font-size:12.2px;color:#6e6c6a;left:203.4px;top:344.44px;transform:translateX(-50%);">3</span><span class="t" style="font-size:11.5px;color:#444240;left:222.25px;top:344.44px;letter-spacing:-0.25px;">0036O00004UqPx7QAF</span><span class="t" style="font-size:11.3px;color:#444240;font-style:italic;left:550.79px;transform-origin:100% 0;top:344.44px;transform:translateX(-100%) scaleX(0.880);letter-spacing:-0.25px;">FALSE</span><span class="t" style="font-size:11.5px;color:#444240;font-style:italic;left:719.24px;top:344.44px;transform:translateX(-100%);letter-spacing:0.20px;">null</span><span class="t" style="font-size:11.5px;color:#444240;left:727.12px;top:344.44px;letter-spacing:-0.15px;">Jimmie</span><span class="t" style="font-size:11.5px;color:#444240;left:953.71px;transform-origin:0 0;top:344.44px;transform:scaleX(1.036);letter-spacing:0.35px;">"20/11/2017"</span><span class="t" style="font-size:11.5px;color:#444240;font-style:italic;left:1282.54px;top:344.44px;transform:translateX(-100%);letter-spacing:0.20px;">null</span><span class="t" style="font-size:11.5px;color:#444240;left:1290.11px;top:344.44px;letter-spacing:0.55px;">"20/11/2017" Jimmie</span><span class="t" style="font-size:12.2px;color:#6e6c6a;left:203.4px;top:366.51px;transform:translateX(-50%);">4</span><span class="t" style="font-size:11.5px;color:#444240;left:222.25px;top:366.51px;letter-spacing:-0.19px;">0036O00004UqPvwQAF</span><span class="t" style="font-size:11.3px;color:#444240;font-style:italic;left:550.79px;transform-origin:100% 0;top:366.51px;transform:translateX(-100%) scaleX(0.880);letter-spacing:-0.25px;">FALSE</span><span class="t" style="font-size:11.5px;color:#444240;font-style:italic;left:719.24px;top:366.51px;transform:translateX(-100%);letter-spacing:0.20px;">null</span><span class="t" style="font-size:11.5px;color:#444240;left:726.36px;transform-origin:0 0;top:366.51px;transform:scaleX(0.980);letter-spacing:-0.25px;">Kacie</span><span class="t" style="font-size:11.5px;color:#444240;left:953.71px;transform-origin:0 0;top:366.51px;transform:scaleX(1.036);letter-spacing:0.35px;">"20/11/2017"</span><span class="t" style="font-size:11.5px;color:#444240;font-style:italic;left:1282.54px;top:366.51px;transform:translateX(-100%);letter-spacing:0.20px;">null</span><span class="t" style="font-size:11.5px;color:#444240;left:1290.11px;top:366.51px;letter-spacing:0.55px;">"20/11/2017" Kacie</span><span class="t" style="font-size:12.2px;color:#6e6c6a;left:203.4px;top:388.58px;transform:translateX(-50%);">5</span><span class="t" style="font-size:11.5px;color:#444240;left:222.25px;top:388.58px;letter-spacing:-0.23px;">0036O00004UqPvyQAF</span><span class="t" style="font-size:11.3px;color:#444240;font-style:italic;left:550.79px;transform-origin:100% 0;top:388.58px;transform:translateX(-100%) scaleX(0.880);letter-spacing:-0.25px;">FALSE</span><span class="t" style="font-size:11.5px;color:#444240;font-style:italic;left:719.24px;top:388.58px;transform:translateX(-100%);letter-spacing:0.20px;">null</span><span class="t" style="font-size:11.5px;color:#444240;left:726.36px;top:388.58px;letter-spacing:0.06px;">Korn</span><span class="t" style="font-size:11.5px;color:#444240;left:953.71px;transform-origin:0 0;top:388.58px;transform:scaleX(1.036);letter-spacing:0.35px;">"20/11/2017"</span><span class="t" style="font-size:11.5px;color:#444240;font-style:italic;left:1282.54px;top:388.58px;transform:translateX(-100%);letter-spacing:0.20px;">null</span><span class="t" style="font-size:11.5px;color:#444240;left:1290.11px;top:388.58px;letter-spacing:0.55px;">"20/11/2017" Korn</span><span class="t" style="font-size:12.2px;color:#6e6c6a;left:203.4px;top:410.65px;transform:translateX(-50%);">6</span><span class="t" style="font-size:11.5px;color:#444240;left:222.25px;top:410.65px;letter-spacing:-0.10px;">003A000001myTurIAE</span><span class="t" style="font-size:11.3px;color:#444240;font-style:italic;left:550.79px;transform-origin:100% 0;top:410.65px;transform:translateX(-100%) scaleX(0.880);letter-spacing:-0.25px;">FALSE</span><span class="t" style="font-size:11.5px;color:#444240;font-style:italic;left:719.24px;top:410.65px;transform:translateX(-100%);letter-spacing:0.20px;">null</span><span class="t" style="font-size:11.5px;color:#444240;left:726.36px;top:410.65px;letter-spacing:0.12px;">Fridman</span><span class="t" style="font-size:11.5px;color:#444240;left:954.18px;top:410.65px;letter-spacing:-0.25px;">Alex</span><span class="t" style="font-size:11.5px;color:#444240;font-style:italic;left:1282.54px;top:410.65px;transform:translateX(-100%);letter-spacing:0.20px;">null</span><span class="t" style="font-size:11.5px;color:#444240;left:1290.58px;top:410.65px;letter-spacing:-0.21px;">Alex Fridman</span><span class="t" style="font-size:12.2px;color:#6e6c6a;left:203.4px;top:432.72px;transform:translateX(-50%);">7</span><span class="t" style="font-size:11.5px;color:#444240;left:222.25px;top:432.72px;letter-spacing:-0.16px;">0032G00002x7e5qQAA</span><span class="t" style="font-size:11.3px;color:#444240;font-style:italic;left:550.79px;transform-origin:100% 0;top:432.72px;transform:translateX(-100%) scaleX(0.880);letter-spacing:-0.25px;">FALSE</span><span class="t" style="font-size:11.5px;color:#444240;left:557.95px;top:432.72px;letter-spacing:-0.08px;">001A000001LmUOnIAN</span><span class="t" style="font-size:11.5px;color:#444240;left:726.72px;top:432.72px;letter-spacing:0.01px;">Greenman</span><span class="t" style="font-size:11.5px;color:#444240;left:954.18px;top:432.72px;letter-spacing:-0.25px;">Alex</span><span class="t" style="font-size:11.5px;color:#444240;font-style:italic;left:1282.54px;top:432.72px;transform:translateX(-100%);letter-spacing:0.20px;">null</span><span class="t" style="font-size:11.5px;color:#444240;left:1290.58px;top:432.72px;letter-spacing:-0.21px;">Alex Greenman</span><span class="t" style="font-size:12.2px;color:#6e6c6a;left:203.4px;top:454.79px;transform:translateX(-50%);">8</span><span class="t" style="font-size:11.5px;color:#444240;left:222.25px;top:454.79px;letter-spacing:-0.14px;">0036O00004UqI3qQAF</span><span class="t" style="font-size:11.3px;color:#444240;font-style:italic;left:550.79px;transform-origin:100% 0;top:454.79px;transform:translateX(-100%) scaleX(0.880);letter-spacing:-0.25px;">FALSE</span><span class="t" style="font-size:11.5px;color:#444240;font-style:italic;left:719.24px;top:454.79px;transform:translateX(-100%);letter-spacing:0.20px;">null</span><span class="t" style="font-size:11.5px;color:#444240;left:726.36px;top:454.79px;letter-spacing:-0.25px;">Pick</span><span class="t" style="font-size:11.5px;color:#444240;left:954.18px;top:454.79px;letter-spacing:-0.25px;">Alma</span><span class="t" style="font-size:11.5px;color:#444240;font-style:italic;left:1282.54px;top:454.79px;transform:translateX(-100%);letter-spacing:0.20px;">null</span><span class="t" style="font-size:11.5px;color:#444240;left:1290.58px;top:454.79px;letter-spacing:-0.21px;">Alma Pick</span><span class="t" style="font-size:12.2px;color:#6e6c6a;left:203.4px;top:476.86px;transform:translateX(-50%);">9</span><span class="t" style="font-size:11.5px;color:#444240;left:222.25px;top:476.86px;letter-spacing:-0.25px;">0036O00004KUDUyQAP</span><span class="t" style="font-size:11.3px;color:#444240;font-style:italic;left:550.79px;transform-origin:100% 0;top:476.86px;transform:translateX(-100%) scaleX(0.880);letter-spacing:-0.25px;">FALSE</span><span class="t" style="font-size:11.5px;color:#444240;font-style:italic;left:719.24px;top:476.86px;transform:translateX(-100%);letter-spacing:0.20px;">null</span><span class="t" style="font-size:11.5px;color:#444240;left:726.36px;top:476.86px;letter-spacing:0.01px;">Kall</span><span class="t" style="font-size:11.5px;color:#444240;left:954.18px;top:476.86px;letter-spacing:-0.25px;">Amy</span><span class="t" style="font-size:11.5px;color:#444240;font-style:italic;left:1282.54px;top:476.86px;transform:translateX(-100%);letter-spacing:0.20px;">null</span><span class="t" style="font-size:11.5px;color:#444240;left:1290.58px;top:476.86px;letter-spacing:-0.21px;">Amy Kall</span><span class="t" style="font-size:12.2px;color:#6e6c6a;left:203.4px;top:498.93px;transform:translateX(-50%);">10</span><span class="t" style="font-size:11.5px;color:#444240;left:222.25px;top:498.93px;letter-spacing:-0.10px;">0036O00004Tr2l8QAB</span><span class="t" style="font-size:11.3px;color:#444240;font-style:italic;left:550.79px;transform-origin:100% 0;top:498.93px;transform:translateX(-100%) scaleX(0.880);letter-spacing:-0.25px;">FALSE</span><span class="t" style="font-size:11.5px;color:#444240;left:557.95px;top:498.93px;letter-spacing:-0.07px;">0016O00003wMJuvQAG</span><span class="t" style="font-size:11.5px;color:#444240;left:726.36px;top:498.93px;letter-spacing:-0.02px;">BA_1057_ln</span><span class="t" style="font-size:11.5px;color:#444240;left:953.26px;top:498.93px;letter-spacing:0.03px;">BA_1057_fn</span><span class="t" style="font-size:11.5px;color:#444240;font-style:italic;left:1282.54px;top:498.93px;transform:translateX(-100%);letter-spacing:0.20px;">null</span><span class="t" style="font-size:11.5px;color:#444240;left:1289.66px;top:498.93px;letter-spacing:-0.21px;">BA_1057_fn BA_1057_ln</span><span class="t" style="font-size:12.2px;color:#6e6c6a;left:203.4px;top:521px;transform:translateX(-50%);">11</span><span class="t" style="font-size:11.5px;color:#444240;left:222.25px;top:521px;letter-spacing:-0.14px;">0032G00002whmRsQAI</span><span class="t" style="font-size:11.3px;color:#444240;font-style:italic;left:550.79px;transform-origin:100% 0;top:521px;transform:translateX(-100%) scaleX(0.880);letter-spacing:-0.25px;">FALSE</span><span class="t" style="font-size:11.5px;color:#444240;font-style:italic;left:719.24px;top:521px;transform:translateX(-100%);letter-spacing:0.20px;">null</span><span class="t" style="font-size:11.5px;color:#444240;left:726.72px;top:521px;letter-spacing:-0.06px;">ContactBAtestLastName</span><span class="t" style="font-size:11.5px;color:#444240;left:953.62px;top:521px;letter-spacing:0.01px;">ContactBAtestFirstName</span><span class="t" style="font-size:11.5px;color:#444240;font-style:italic;left:1282.54px;top:521px;transform:translateX(-100%);letter-spacing:0.20px;">null</span><span class="t" style="font-size:11.5px;color:#444240;left:1290.02px;top:521px;letter-spacing:-0.21px;">ContactBAtestFirstName</span><span class="t" style="font-size:12.2px;color:#6e6c6a;left:203.4px;top:543.07px;transform:translateX(-50%);">12</span><span class="t" style="font-size:11.5px;color:#444240;left:222.25px;top:543.07px;letter-spacing:-0.19px;">0036O00004UnNzdQAF</span><span class="t" style="font-size:11.3px;color:#444240;font-style:italic;left:550.79px;transform-origin:100% 0;top:543.07px;transform:translateX(-100%) scaleX(0.880);letter-spacing:-0.25px;">FALSE</span><span class="t" style="font-size:11.5px;color:#444240;left:557.95px;transform-origin:0 0;top:543.07px;transform:scaleX(0.987);letter-spacing:-0.25px;">0016O00003zKyEvQAK</span><span class="t" style="font-size:11.5px;color:#444240;left:726.78px;top:543.07px;letter-spacing:-0.14px;">Serrano</span><span class="t" style="font-size:11.5px;color:#444240;left:953.26px;top:543.07px;letter-spacing:0.07px;">Ervin</span><span class="t" style="font-size:11.5px;color:#444240;font-style:italic;left:1282.54px;top:543.07px;transform:translateX(-100%);letter-spacing:0.20px;">null</span><span class="t" style="font-size:11.5px;color:#444240;left:1289.66px;top:543.07px;letter-spacing:-0.21px;">Ervin Serrano</span><span class="t" style="font-size:12.2px;color:#6e6c6a;left:203.4px;top:565.14px;transform:translateX(-50%);">13</span><span class="t" style="font-size:11.5px;color:#444240;left:222.25px;top:565.14px;letter-spacing:-0.25px;">0036O00004KUDUxQAP</span><span class="t" style="font-size:11.3px;color:#444240;font-style:italic;left:550.79px;transform-origin:100% 0;top:565.14px;transform:translateX(-100%) scaleX(0.880);letter-spacing:-0.25px;">FALSE</span><span class="t" style="font-size:11.5px;color:#444240;font-style:italic;left:719.24px;top:565.14px;transform:translateX(-100%);letter-spacing:0.20px;">null</span><span class="t" style="font-size:11.5px;color:#444240;left:726.72px;top:565.14px;letter-spacing:0.20px;">Corporation</span><span class="t" style="font-size:11.5px;color:#444240;left:953.62px;top:565.14px;letter-spacing:-0.20px;">Gibsons</span><span class="t" style="font-size:11.5px;color:#444240;font-style:italic;left:1282.54px;top:565.14px;transform:translateX(-100%);letter-spacing:0.20px;">null</span><span class="t" style="font-size:11.5px;color:#444240;left:1290.02px;top:565.14px;letter-spacing:-0.21px;">Gibsons Corporation</span><span class="t" style="font-size:12.2px;color:#6e6c6a;left:203.4px;top:587.21px;transform:translateX(-50%);">14</span><span class="t" style="font-size:11.5px;color:#444240;left:222.25px;top:587.21px;letter-spacing:-0.25px;">0036O00004TqzGbQAJ</span><span class="t" style="font-size:11.3px;color:#444240;font-style:italic;left:550.79px;transform-origin:100% 0;top:587.21px;transform:translateX(-100%) scaleX(0.880);letter-spacing:-0.25px;">FALSE</span><span class="t" style="font-size:11.5px;color:#444240;left:557.95px;top:587.21px;letter-spacing:-0.10px;">0016O00003xzblIQAQ</span><span class="t" style="font-size:11.5px;color:#444240;left:726.36px;top:587.21px;letter-spacing:-0.03px;">Doe</span><span class="t" style="font-size:11.5px;color:#444240;left:954.02px;transform-origin:0 0;top:587.21px;transform:scaleX(0.932);letter-spacing:-0.25px;">Jane</span><span class="t" style="font-size:11.5px;color:#444240;font-style:italic;left:1282.54px;top:587.21px;transform:translateX(-100%);letter-spacing:0.20px;">null</span><span class="t" style="font-size:11.5px;color:#444240;left:1290.42px;top:587.21px;letter-spacing:-0.21px;">Jane Doe</span><span class="t" style="font-size:12.2px;color:#6e6c6a;left:203.4px;top:609.28px;transform:translateX(-50%);">15</span><span class="t" style="font-size:11.5px;color:#444240;left:222.25px;top:609.28px;letter-spacing:-0.13px;">0036O00004UnDimQAF</span><span class="t" style="font-size:11.3px;color:#444240;font-style:italic;left:550.79px;transform-origin:100% 0;top:609.28px;transform:translateX(-100%) scaleX(0.880);letter-spacing:-0.25px;">FALSE</span><span class="t" style="font-size:11.5px;color:#444240;font-style:italic;left:719.24px;top:609.28px;transform:translateX(-100%);letter-spacing:0.20px;">null</span><span class="t" style="font-size:11.5px;color:#444240;left:726.78px;top:609.28px;letter-spacing:0.09px;">Smith</span><span class="t" style="font-size:11.5px;color:#444240;left:954.02px;top:609.28px;letter-spacing:-0.25px;">John</span><span class="t" style="font-size:11.5px;color:#444240;font-style:italic;left:1282.54px;top:609.28px;transform:translateX(-100%);letter-spacing:0.20px;">null</span><span class="t" style="font-size:11.5px;color:#444240;left:1290.42px;top:609.28px;letter-spacing:-0.21px;">John Smith</span><span class="t" style="font-size:12.2px;color:#6e6c6a;left:203.4px;top:631.35px;transform:translateX(-50%);">16</span><span class="t" style="font-size:11.5px;color:#444240;left:222.25px;top:631.35px;letter-spacing:-0.16px;">0036O00004UnNzfQAF</span><span class="t" style="font-size:11.3px;color:#444240;font-style:italic;left:550.79px;transform-origin:100% 0;top:631.35px;transform:translateX(-100%) scaleX(0.880);letter-spacing:-0.25px;">FALSE</span><span class="t" style="font-size:11.5px;color:#444240;left:557.95px;transform-origin:0 0;top:631.35px;transform:scaleX(0.984);letter-spacing:-0.25px;">0016O00003zKyExQAK</span><span class="t" style="font-size:11.5px;color:#444240;left:726.36px;top:631.35px;letter-spacing:0.15px;">Pellerin</span><span class="t" style="font-size:11.5px;color:#444240;left:954.02px;transform-origin:0 0;top:631.35px;transform:scaleX(0.974);letter-spacing:-0.25px;">Joseph</span><span class="t" style="font-size:11.5px;color:#444240;font-style:italic;left:1282.54px;top:631.35px;transform:translateX(-100%);letter-spacing:0.20px;">null</span><span class="t" style="font-size:11.5px;color:#444240;left:1290.42px;top:631.35px;letter-spacing:-0.21px;">Joseph Pellerin</span><span class="t" style="font-size:12.2px;color:#6e6c6a;left:203.4px;top:653.42px;transform:translateX(-50%);">17</span><span class="t" style="font-size:11.5px;color:#444240;left:222.25px;top:653.42px;letter-spacing:-0.17px;">0032G00002x7ICzQAM</span><span class="t" style="font-size:11.3px;color:#444240;font-style:italic;left:550.79px;transform-origin:100% 0;top:653.42px;transform:translateX(-100%) scaleX(0.880);letter-spacing:-0.25px;">FALSE</span><span class="t" style="font-size:11.5px;color:#444240;left:557.95px;top:653.42px;letter-spacing:-0.14px;">0012G00002G47lqQAB</span><span class="t" style="font-size:11.5px;color:#444240;left:726.78px;top:653.42px;letter-spacing:0.07px;">Sporting</span><span class="t" style="font-size:11.5px;color:#444240;left:953.26px;top:653.42px;letter-spacing:0.35px;">Mark's</span><span class="t" style="font-size:11.5px;color:#444240;font-style:italic;left:1282.54px;top:653.42px;transform:translateX(-100%);letter-spacing:0.20px;">null</span><span class="t" style="font-size:11.5px;color:#444240;left:1289.66px;top:653.42px;letter-spacing:-0.21px;">Mark's Sporting</span><span class="t" style="font-size:12.2px;color:#6e6c6a;left:203.4px;top:675.49px;transform:translateX(-50%);">18</span><span class="t" style="font-size:11.5px;color:#444240;left:222.25px;top:675.49px;letter-spacing:-0.23px;">0036O00004UnNzeQAF</span><span class="t" style="font-size:11.3px;color:#444240;font-style:italic;left:550.79px;transform-origin:100% 0;top:675.49px;transform:translateX(-100%) scaleX(0.880);letter-spacing:-0.25px;">FALSE</span><span class="t" style="font-size:11.5px;color:#444240;left:557.95px;top:675.49px;letter-spacing:-0.25px;">0016O00003zKyEwQAK</span><span class="t" style="font-size:11.5px;color:#444240;left:726.36px;top:675.49px;letter-spacing:0.11px;">Peterson</span><span class="t" style="font-size:11.5px;color:#444240;left:953.68px;transform-origin:0 0;top:675.49px;transform:scaleX(0.980);letter-spacing:-0.25px;">Sheila</span><span class="t" style="font-size:11.5px;color:#444240;font-style:italic;left:1282.54px;top:675.49px;transform:translateX(-100%);letter-spacing:0.20px;">null</span><span class="t" style="font-size:11.5px;color:#444240;left:1290.08px;top:675.49px;letter-spacing:-0.21px;">Sheila Peterson</span><span class="t" style="font-size:12.2px;color:#6e6c6a;left:203.4px;top:697.56px;transform:translateX(-50%);">19</span><span class="t" style="font-size:11.5px;color:#444240;left:222.25px;top:697.56px;letter-spacing:-0.25px;">0036O00004S7egaQAB</span><span class="t" style="font-size:11.3px;color:#444240;font-style:italic;left:550.79px;transform-origin:100% 0;top:697.56px;transform:translateX(-100%) scaleX(0.880);letter-spacing:-0.25px;">FALSE</span><span class="t" style="font-size:11.5px;color:#444240;font-style:italic;left:719.24px;top:697.56px;transform:translateX(-100%);letter-spacing:0.20px;">null</span><span class="t" style="font-size:11.5px;color:#444240;left:726.78px;top:697.56px;letter-spacing:0.09px;">Smith</span><span class="t" style="font-size:11.5px;color:#444240;font-style:italic;left:1114.34px;top:697.56px;transform:translateX(-100%);letter-spacing:0.20px;">null</span><span class="t" style="font-size:11.5px;color:#444240;font-style:italic;left:1282.54px;top:697.56px;transform:translateX(-100%);letter-spacing:0.20px;">null</span><span class="t" style="font-size:11.5px;color:#444240;left:1290.08px;top:697.56px;letter-spacing:-0.21px;">Smith</span><span class="t" style="font-size:12.2px;color:#6e6c6a;left:203.4px;top:719.63px;transform:translateX(-50%);">20</span><span class="t" style="font-size:11.5px;color:#444240;left:222.25px;top:719.63px;letter-spacing:-0.24px;">0036O00004S7egbQAB</span><span class="t" style="font-size:11.3px;color:#444240;font-style:italic;left:550.79px;transform-origin:100% 0;top:719.63px;transform:translateX(-100%) scaleX(0.880);letter-spacing:-0.25px;">FALSE</span><span class="t" style="font-size:11.5px;color:#444240;font-style:italic;left:719.24px;top:719.63px;transform:translateX(-100%);letter-spacing:0.20px;">null</span><span class="t" style="font-size:11.5px;color:#444240;left:726.78px;top:719.63px;letter-spacing:-0.25px;">Stets</span><span class="t" style="font-size:11.5px;color:#444240;font-style:italic;left:1114.34px;top:719.63px;transform:translateX(-100%);letter-spacing:0.20px;">null</span><span class="t" style="font-size:11.5px;color:#444240;font-style:italic;left:1282.54px;top:719.63px;transform:translateX(-100%);letter-spacing:0.20px;">null</span><span class="t" style="font-size:11.5px;color:#444240;left:1290.08px;top:719.63px;letter-spacing:-0.21px;">Stets</span><span class="t" style="font-size:12.2px;color:#6e6c6a;left:203.4px;top:741.7px;transform:translateX(-50%);">21</span><span class="t" style="font-size:11.5px;color:#444240;left:222.25px;top:741.7px;letter-spacing:-0.25px;">0036O00004KUDUzQAP</span><span class="t" style="font-size:11.3px;color:#444240;font-style:italic;left:550.79px;transform-origin:100% 0;top:741.7px;transform:translateX(-100%) scaleX(0.880);letter-spacing:-0.25px;">FALSE</span><span class="t" style="font-size:11.5px;color:#444240;left:557.95px;top:741.7px;letter-spacing:-0.08px;">001A000001LmUOnIAN</span><span class="t" style="font-size:11.5px;color:#444240;left:727.04px;top:741.7px;letter-spacing:-0.17px;">TestLastnameBA</span><span class="t" style="font-size:11.5px;color:#444240;left:953.94px;top:741.7px;letter-spacing:-0.11px;">TestNameBA</span><span class="t" style="font-size:11.5px;color:#444240;font-style:italic;left:1282.54px;top:741.7px;transform:translateX(-100%);letter-spacing:0.20px;">null</span><span class="t" style="font-size:11.5px;color:#444240;left:1290.34px;top:741.7px;letter-spacing:-0.21px;">TestNameBA TestLastnameBA</span><span class="t" style="font-size:12.2px;color:#6e6c6a;left:203.4px;top:763.77px;transform:translateX(-50%);">22</span><span class="t" style="font-size:11.5px;color:#444240;left:222.25px;top:763.77px;letter-spacing:0.04px;">0032G00002wiKM3QAM</span><span class="t" style="font-size:11.3px;color:#444240;font-style:italic;left:550.79px;transform-origin:100% 0;top:763.77px;transform:translateX(-100%) scaleX(0.880);letter-spacing:-0.25px;">FALSE</span><span class="t" style="font-size:11.5px;color:#444240;font-style:italic;left:719.24px;top:763.77px;transform:translateX(-100%);letter-spacing:0.20px;">null</span><span class="t" style="font-size:11.5px;color:#444240;left:727.04px;top:763.77px;letter-spacing:-0.22px;">TestLastnameBAX</span><span class="t" style="font-size:11.5px;color:#444240;left:953.94px;top:763.77px;letter-spacing:-0.20px;">TestNameBAX</span><span class="t" style="font-size:11.5px;color:#444240;font-style:italic;left:1282.54px;top:763.77px;transform:translateX(-100%);letter-spacing:0.20px;">null</span><span class="t" style="font-size:11.5px;color:#444240;left:1290.34px;top:763.77px;letter-spacing:-0.21px;">TestNameBAX TestLastnameBAX</span><span class="t" style="font-size:12.2px;color:#6e6c6a;left:203.4px;top:785.84px;transform:translateX(-50%);">23</span></div><div class="b" style="left:1112px;top:27px;width:17px;height:502px;background:#f0f0f0;"></div><div class="b" style="left:1113px;top:63px;width:15px;height:199.5px;background:#c8c8c8;"></div><div class="b" style="left:31.5px;top:511.3px;width:1097.5px;height:17.7px;background:#f0f0f0;"></div><div class="b" style="left:66.3px;top:511.3px;width:409.7px;height:16.7px;background:#c8c8c8;"></div><div class="b" style="left:-188px;top:-272px;width:0;height:0"><svg style="left:1300px;top:310px" width="18" height="20" viewBox="1300 310 18 20"><path d="M1303.4 325 L1308.5 319 L1313.6 325" fill="none" stroke="#4f4e4d" stroke-width="2.7"/></svg><svg style="left:1300px;top:750px" width="18" height="20" viewBox="1300 750 18 20"><path d="M1303.5 757 L1308.6 763 L1313.7 757" fill="none" stroke="#4f4e4d" stroke-width="2.7"/></svg><svg style="left:234px;top:783px" width="18" height="18" viewBox="234 783 18 18"><path d="M246 787 L240 792 L246 797" fill="none" stroke="#4f4e4d" stroke-width="2.7"/></svg><svg style="left:1268px;top:783px" width="18" height="18" viewBox="1268 783 18 18"><path d="M1273.4 787 L1279.6 792 L1273.4 797" fill="none" stroke="#4f4e4d" stroke-width="2.7"/></svg></div></div><!-- query settings --><div class="b" style="left:1321px;top:146.5px;width:1px;height:653.5px;background:#dad8d6;"></div><span class="t" style="font-size:14.5px;color:#767472;left:1333.71px;transform-origin:0 0;top:157.8px;transform:scaleX(0.983);letter-spacing:-0.25px;">Query Settings</span><svg style="left:1562px;top:160px" width="12" height="12" viewBox="0 0 12 12"><path d="M0.5 0.5 L11.5 11.5 M11.5 0.5 L0.5 11.5" fill="none" stroke="#605e5c" stroke-width="1.2"/></svg><svg style="left:1334px;top:196.5px" width="6" height="6" viewBox="0 0 6 6"><path d="M6 0 L6 6 L0 6 Z" fill="#3b3a39"/></svg><span class="t" style="font-size:12px;color:#252423;font-weight:700;left:1346.7px;transform-origin:0 0;top:190.8px;transform:scaleX(0.982);letter-spacing:-0.25px;">PROPERTIES</span><span class="t" style="font-size:12.5px;color:#252423;left:1346.47px;top:212.97px;letter-spacing:0.25px;">Name</span><div class="b" style="left:1346px;top:232px;width:230px;height:22.5px;background:#ffffff;border:1px solid #c8c6c4;"></div><span class="t" style="font-size:12.5px;color:#605e5c;left:1352.87px;top:234.47px;letter-spacing:-0.25px;">Contact (2)</span><span class="t" style="font-size:12.5px;color:#117865;left:1347.48px;top:261.88px;letter-spacing:-0.03px;">All Properties</span><svg style="left:1334px;top:302.5px" width="6" height="6" viewBox="0 0 6 6"><path d="M6 0 L6 6 L0 6 Z" fill="#3b3a39"/></svg><span class="t" style="font-size:12px;color:#252423;font-weight:700;left:1347.2px;transform-origin:0 0;top:296.8px;transform:scaleX(0.984);letter-spacing:-0.25px;">APPLIED STEPS</span><div class="b" style="left:1346.5px;top:322px;width:229.5px;height:452px;background:#f3f2f1;border:1px solid #cfcdcb;"></div><div class="b" style="left:1348px;top:385px;width:227px;height:21px;background:#d0cecc;"></div><div class="b" style="left:1348px;top:385px;width:2.5px;height:21px;background:#117865;"></div><span class="t" style="font-size:12.5px;color:#3b3a39;left:1370.63px;top:323.98px;letter-spacing:-0.24px;">Source</span><span class="t" style="font-size:12.5px;color:#3b3a39;left:1370.17px;top:344.98px;letter-spacing:0.01px;">Removed Other Columns</span><span class="t" style="font-size:12.5px;color:#3b3a39;left:1370.63px;top:365.98px;letter-spacing:-0.12px;">Sorted Rows</span><span class="t" style="font-size:12.5px;color:#3b3a39;left:1370.17px;top:386.98px;">Removed Duplicates</span><svg style="left:1356px;top:392px" width="9" height="9" viewBox="0 0 9 9"><path d="M0.5 0.5 L8.5 8.5 M8.5 0.5 L0.5 8.5" fill="none" stroke="#605e5c" stroke-width="1.2"/></svg><svg style="left:1554.6px;top:347.5px" width="14" height="14" viewBox="-7 -7 14 14"><rect x="-1.25" y="-6.1" width="2.5" height="3" fill="#a9a7a5" transform="rotate(0)"/><rect x="-1.25" y="-6.1" width="2.5" height="3" fill="#a9a7a5" transform="rotate(45)"/><rect x="-1.25" y="-6.1" width="2.5" height="3" fill="#a9a7a5" transform="rotate(90)"/><rect x="-1.25" y="-6.1" width="2.5" height="3" fill="#a9a7a5" transform="rotate(135)"/><rect x="-1.25" y="-6.1" width="2.5" height="3" fill="#a9a7a5" transform="rotate(180)"/><rect x="-1.25" y="-6.1" width="2.5" height="3" fill="#a9a7a5" transform="rotate(225)"/><rect x="-1.25" y="-6.1" width="2.5" height="3" fill="#a9a7a5" transform="rotate(270)"/><rect x="-1.25" y="-6.1" width="2.5" height="3" fill="#a9a7a5" transform="rotate(315)"/><circle cx="0" cy="0" r="3.4" fill="none" stroke="#a9a7a5" stroke-width="2.2"/></svg><svg style="left:1340.2px;top:313.1px" width="246.8" height="102.9" viewBox="1340.2 313.1 246.8 102.9"><rect x="1342.35" y="315.25" width="242.5" height="98.6" rx="9.35" fill="none" stroke="#0aad37" stroke-width="2.3"/></svg><!-- status bar --><div class="b" style="left:0px;top:800px;width:1600px;height:1px;background:#dcdcdc;"></div><span class="t" style="font-size:11.5px;color:#3b3a39;left:-0.88px;transform-origin:0 0;top:803.12px;transform:scaleX(0.978);letter-spacing:-0.25px;">14 COLUMNS, 45 ROWS</span><span class="t" style="font-size:11.5px;color:#3b3a39;left:138.92px;top:803.12px;letter-spacing:0.10px;">Column profiling based on top 1000 rows</span><span class="t" style="font-size:11.5px;color:#3b3a39;left:1419.06px;transform-origin:0 0;top:803.12px;transform:scaleX(0.975);letter-spacing:-0.25px;">PREVIEW DOWNLOADED AT 07:42</span></div></body></html>
